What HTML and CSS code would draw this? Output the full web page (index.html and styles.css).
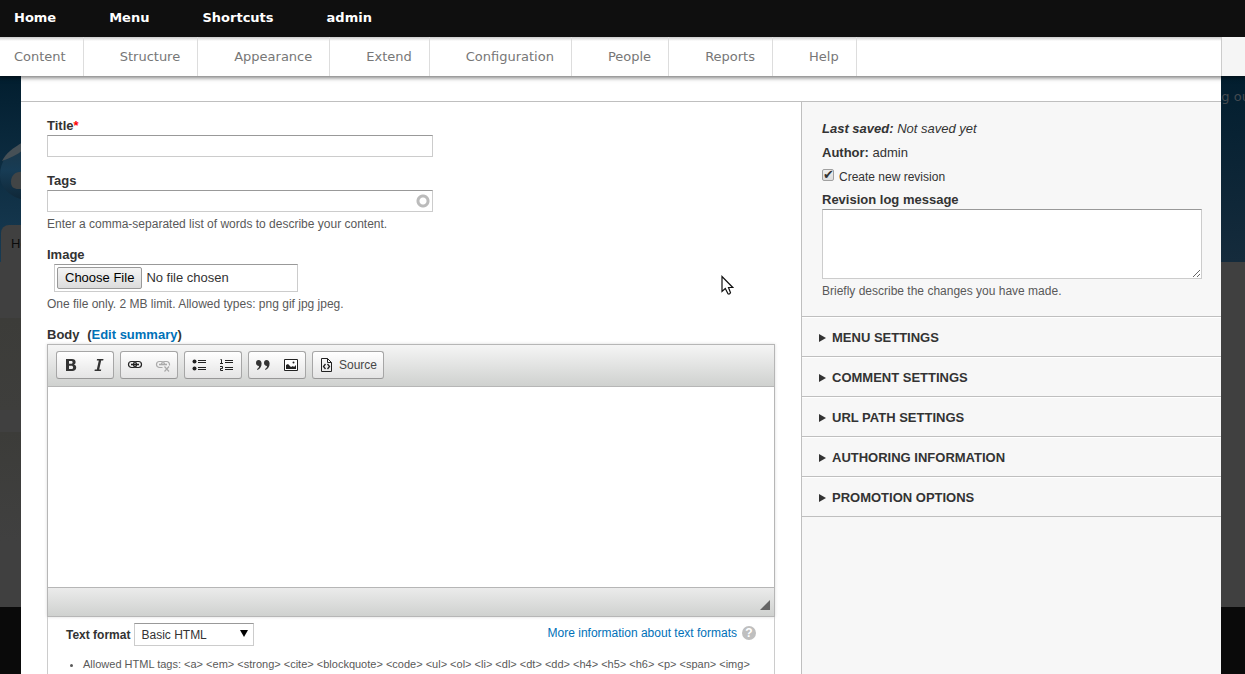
FILE: index.html
```
<!DOCTYPE html>
<html lang="en">
<head>
<meta charset="utf-8">
<title>Create Article</title>
<link rel="stylesheet" href="styles.css">
</head>
<body>
<header class="toolbar">
  <nav class="bar" aria-label="Toolbar">
    <a href="#">Home</a><a href="#">Menu</a><a href="#">Shortcuts</a><a href="#">admin</a>
  </nav>
  <nav class="tray" aria-label="Administration">
    <a href="#">Content</a><a href="#">Structure</a><a href="#">Appearance</a><a href="#">Extend</a><a href="#">Configuration</a><a href="#">People</a><a href="#">Reports</a><a href="#">Help</a>
    <span class="tray-end"></span>
  </nav>
</header>
<div class="stage">
  <div class="site">
    <div class="site-header">
      <svg class="drop" width="60" height="66" viewBox="0 0 60 66" aria-hidden="true">
        <defs><linearGradient id="drop" x1="0" y1="0" x2="0" y2="1"><stop offset="0" stop-color="#1d3442"/><stop offset=".5" stop-color="#173c55"/><stop offset="1" stop-color="#0f2636"/></linearGradient></defs>
        <path d="M0 36C0 22 8 14 22 4L60 0V62H30C12 60 0 50 0 36Z" fill="url(#drop)"/>
        <path d="M2 22C6 14 13 9 23 3V11C17 16 10 19 2 22Z" fill="#465056"/>
        <path d="M11 43C11 36 16 32 23 33C31 35 38 41 44 36L44 50H18C14 50 11 48 11 43Z" fill="#424546"/>
      </svg>
      <span class="logout">Log out</span>
      <span class="tab">Home</span>
    </div>
    <div class="site-main"><div class="block block-a"></div><div class="block block-b"></div></div>
    <div class="site-footer"></div>
  </div>
  <main class="modal">
    <div class="modal-head"></div>
    <form class="node-form">
      <section class="main-col">
        <div class="item">
          <label class="label" for="title">Title<span class="req">*</span></label>
          <input class="text" id="title" type="text">
        </div>
        <div class="item">
          <label class="label" for="tags">Tags</label>
          <input class="text auto" id="tags" type="text">
          <p class="desc">Enter a comma-separated list of words to describe your content.</p>
        </div>
        <div class="item">
          <label class="label" for="image">Image</label>
          <input class="file" id="image" type="file">
          <p class="desc">One file only. 2 MB limit. Allowed types: png gif jpg jpeg.</p>
        </div>
        <div class="item">
          <div class="label"><label for="body">Body</label> <span class="summary-link">(<a href="#">Edit summary</a>)</span></div>
          <div class="editor">
            <div class="ed-tools">
              <div class="group">
                <button type="button" aria-label="Bold"><svg width="16" height="16" viewBox="0 0 16 16"><path fill-rule="evenodd" fill="#333" d="M3 2h6c2.300 0 3.600 1 3.600 3 0 1.300-.6 2.200-1.700 2.600 1.500.4 2.300 1.400 2.300 3C13.200 12.900 11.700 14 9.300 14H3zM6 4.100v2.700h2c1 0 1.600-.5 1.600-1.400S9 4.100 8 4.100zM6 8.800v3.100h2.200c1.200 0 1.900-.5 1.900-1.500s-.7-1.600-1.900-1.600z"/></svg></button>
                <button type="button" aria-label="Italic"><svg width="16" height="16" viewBox="0 0 16 16"><path fill="#333" d="M6 2h6.500l-.3 1.500h-2L8.200 12.500h2l-.3 1.500H3.500l.3-1.500h2L7.800 3.500h-2z"/></svg></button>
              </div>
              <div class="group">
                <button type="button" aria-label="Link"><svg width="16" height="16" viewBox="0 0 16 16" fill="none" stroke="#222" stroke-width="1.200"><rect x="1.500" y="4.500" width="8" height="6" rx="3"/><rect x="6.500" y="4.500" width="8" height="6" rx="3"/><path d="M4 7.500h8" stroke-width="1.600"/></svg></button>
                <button type="button" aria-label="Unlink"><svg width="16" height="16" viewBox="0 0 16 16" fill="none" stroke="#aaa" stroke-width="1.200"><path d="M7.500 10.500h-3a3 3 0 0 1 0-6h2c2 0 3 1.500 3 3M14.500 8.500c.3-2.500-1-4-3-4h-2c-2 0-3 1.500-3 3"/><path d="M4 7.500h8" stroke-width="1.600"/><path d="M9.500 9.500l4.500 5M14 9.500l-4.500 5"/></svg></button>
              </div>
              <div class="group">
                <button type="button" aria-label="Bulleted list"><svg width="16" height="16" viewBox="0 0 16 16"><g fill="#222"><circle cx="3.500" cy="4.500" r="2"/><circle cx="3.500" cy="11.500" r="2"/><path d="M7 3h8v1H7zM7 5h8v1H7zM7 10h8v1H7zM7 12h8v1H7z"/></g></svg></button>
                <button type="button" aria-label="Numbered list"><svg width="16" height="16" viewBox="0 0 16 16"><path fill="#222" d="M6 3h8v1H6zM6 5h8v1H6zM6 10h8v1H6zM6 12h8v1H6z"/><path d="M1.500 2.500h1V6M1 6.500h3M1 9.500h2.500v2H1.500v2H4" fill="none" stroke="#222"/></svg></button>
              </div>
              <div class="group">
                <button type="button" aria-label="Block quote"><svg width="16" height="16" viewBox="0 0 16 16"><path fill="#333" d="M3.500 3C5.500 3 6.600 4.600 6.600 6.600c0 3-1.600 5.400-4.200 6.400l-.4-.9c1.300-.9 2-2 2-3.200C2.200 8.900 1 7.800 1 6c0-1.800 1-3 2.500-3zM11.500 3C13.500 3 14.600 4.600 14.600 6.600c0 3-1.600 5.400-4.200 6.400l-.4-.9c1.300-.9 2-2 2-3.200C10.200 8.900 9 7.800 9 6c0-1.800 1-3 2.500-3z"/></svg></button>
                <button type="button" aria-label="Image"><svg width="16" height="16" viewBox="0 0 16 16"><path d="M1.500 2.500h13v11h-13z" fill="#fff" stroke="#222"/><path fill="#222" d="M3 12V8l2-1 3 3 2-1 1 1 2-2v4z"/><circle cx="10.500" cy="5.500" r="1" fill="#222"/></svg></button>
              </div>
              <div class="group">
                <button class="source" type="button"><svg width="16" height="16" viewBox="0 0 16 16" fill="none" stroke="#222" aria-hidden="true"><path d="M2.500 1.500h6l4 4v9h-10zM8.500 1.500v4h4"/><path d="M6.500 7L4.500 9.500l2 2.500M8.500 7l2 2.500-2 2.500" stroke-width="1.300"/></svg>Source</button>
              </div>
            </div>
            <textarea class="ed-body" id="body"></textarea>
            <div class="ed-foot"><span class="ed-grip"></span></div>
          </div>
          <div class="format">
            <div class="format-row">
              <label for="format">Text format</label>
              <span class="select"><select id="format"><option>Basic HTML</option></select></span>
              <a class="help" href="#">More information about text formats <span class="qm">?</span></a>
            </div>
            <ul class="tips"><li>Allowed HTML tags: &lt;a&gt; &lt;em&gt; &lt;strong&gt; &lt;cite&gt; &lt;blockquote&gt; &lt;code&gt; &lt;ul&gt; &lt;ol&gt; &lt;li&gt; &lt;dl&gt; &lt;dt&gt; &lt;dd&gt; &lt;h4&gt; &lt;h5&gt; &lt;h6&gt; &lt;p&gt; &lt;span&gt; &lt;img&gt;</li></ul>
          </div>
        </div>
      </section>
      <aside class="side-col">
        <div class="meta">
          <p class="meta-line"><em><b>Last saved:</b> Not saved yet</em></p>
          <p class="meta-line"><b>Author:</b> admin</p>
          <div class="check"><input id="rev" type="checkbox" checked><label for="rev">Create new revision</label></div>
          <label class="label" for="log">Revision log message</label>
          <textarea class="log" id="log"></textarea>
          <p class="desc">Briefly describe the changes you have made.</p>
        </div>
        <details><summary>Menu settings</summary></details>
        <details><summary>Comment settings</summary></details>
        <details><summary>URL path settings</summary></details>
        <details><summary>Authoring information</summary></details>
        <details><summary>Promotion options</summary></details>
      </aside>
    </form>
  </main>
</div>
<svg class="cursor" width="13" height="21" viewBox="0 0 13 21" aria-hidden="true"><path d="M1 1.500v15l3.300-3 2.700 5.300q1.500.8 2.500-1L7.500 12.500h4.300z" fill="#fff" stroke="#111" stroke-width="1.200"/></svg>
</body>
</html>
```
FILE: styles.css
```
* { box-sizing: border-box; }
html, body { height: 100%; }
body {
  margin: 0;
  display: flex;
  flex-direction: column;
  overflow: hidden;
  font: 13px/18px "Liberation Sans", Arial, sans-serif;
  color: #333;
  background: #0a0a0a;
}
p, ul { margin: 0; padding: 0; }
a { color: #0071b8; text-decoration: none; }

/* Toolbar */
.toolbar {
  position: relative;
  z-index: 3;
  flex: none;
  font: 13px/40px "DejaVu Sans", Verdana, sans-serif;
  box-shadow: 0 1px 4px 1px rgba(0, 0, 0, .5);
}
.bar { display: flex; height: 37px; line-height: 35px; background: #0f0f0f; }
.bar a { padding: 0 17px 0 36px; color: #fff; font-weight: bold; }
.tray {
  display: flex;
  height: 39px;
  background: #fff linear-gradient(#ccc, #fff) top / 100% 4px no-repeat;
}
.tray a { padding: 0 17px 0 36px; color: #777; border-right: 1px solid #ddd; }
.bar a:first-child, .tray a:first-child { padding-left: 14px; }
.tray-end {
  width: 24px;
  margin-left: auto;
  border-left: 1px solid #ccc;
  background: #f5f5f5;
}

/* Dimmed site behind the dialog */
.stage { position: relative; flex: 1; min-height: 0; overflow: hidden; }
.site {
  position: absolute;
  inset: 0;
  display: flex;
  flex-direction: column;
  overflow: hidden;
}
.site-header {
  position: relative;
  flex: none;
  height: 186px;
  background: linear-gradient(#021e2f, #152b3c);
}
.site-header::before {
  content: "";
  position: absolute;
  inset: 0 auto 0 0;
  width: 50%;
  background: linear-gradient(#021e2f, #183b53);
}
.drop { position: absolute; left: 0; top: 63px; }
.logout { position: absolute; right: -10px; top: 12px; color: #434a50; font: 13px/18px "DejaVu Sans", sans-serif; }
.tab {
  position: absolute;
  left: 1px;
  bottom: 0;
  height: 37px;
  padding: 0 10px;
  border-radius: 8px 8px 0 0;
  background: #404040;
  color: #0b0b0b;
  line-height: 37px;
}
.site-main { flex: none; height: 345px; padding-top: 56px; background: #404040; }
.block { width: 50%; }
.block-a { height: 92px; margin-bottom: 22px; background: linear-gradient(#3c3c39, #3e3e3c); }
.block-b { height: 109px; background: linear-gradient(#3c3c39, #404040); }
.site-footer { flex: 1; background: #0a0a0a; }

/* Dialog */
.modal {
  position: relative;
  display: flex;
  flex-direction: column;
  height: 100%;
  margin: 0 24px 0 21px;
  background: #fff;
}
.modal-head { flex: none; height: 26px; border-bottom: 1px solid #bfbfbf; }
.node-form {
  flex: 1;
  display: grid;
  grid-template-columns: 65fr 35fr;
  min-height: 0;
}
.main-col {
  display: flex;
  flex-direction: column;
  gap: 15px;
  padding: 15px 26px 0;
  min-width: 0;
}
.label { display: block; line-height: 18px; font-weight: bold; }
.req { color: #f00; }
.summary-link { margin-left: 4px; }
.desc { margin-top: 5px; font-size: 12px; line-height: 14px; color: #595959; }
.text, .file, .log, select {
  display: block;
  border: 1px solid #ccc;
  border-top-color: #999;
  border-radius: 0;
  background: #fff;
  color: #333;
}
.text { width: 386px; max-width: 100%; height: 22px; padding: 2px; }
.auto { background: radial-gradient(circle, transparent 3px, #bbb 4px, #bbb 6px, transparent 7px) right 2px center / 14px 14px no-repeat; }
.file {
  width: 244px;
  height: 28px;
  margin-left: 7px;
  padding: 2px;
  font: 13px/22px "Liberation Sans", Arial, sans-serif;
}
.file::file-selector-button {
  height: 22px;
  margin: 0 4px 0 0;
  padding: 0 7px;
  border: 1px solid #999;
  border-radius: 2px;
  background: linear-gradient(#f4f4f4, #dcdcdc);
  font: 13px/20px "Liberation Sans", Arial, sans-serif;
  color: #000;
}

/* Editor */
.editor { border: 1px solid #b6b6b6; box-shadow: 0 0 3px rgba(0, 0, 0, .15); }
.ed-tools {
  display: flex;
  gap: 6px;
  padding: 6px 8px 7px;
  border-bottom: 1px solid #b6b6b6;
  background: linear-gradient(#f5f5f5, #cfd1cf);
}
.group {
  display: flex;
  border: 1px solid #a6a6a6;
  border-bottom-color: #979797;
  border-radius: 3px;
  background: linear-gradient(#fff, #e4e4e4);
}
.group button {
  display: flex;
  align-items: center;
  gap: 4px;
  height: 26px;
  padding: 0 6px;
  border: 0;
  background: none;
  font: 12px/18px "Liberation Sans", Arial, sans-serif;
  color: #474747;
}
.ed-body { display: block; width: 100%; height: 200px; border: 0; resize: none; background: #fff; }
.ed-foot {
  display: flex;
  justify-content: flex-end;
  align-items: flex-end;
  height: 29px;
  padding: 0 4px 6px;
  border-top: 1px solid #b6b6b6;
  background: linear-gradient(#ebebeb, #cfd1cf);
}
.ed-grip { width: 10px; height: 10px; background: #666; clip-path: polygon(100% 0, 100% 100%, 0 100%); }
.format {
  padding: 6px 18px 20px;
  border: solid #ccc;
  border-width: 0 1px;
}
.format-row { display: flex; align-items: center; gap: 4px; font-size: 12px; }
.format-row label { font-weight: bold; }
.select { position: relative; }
.select::after {
  content: "";
  position: absolute;
  right: 6px;
  top: 7px;
  border: solid transparent;
  border-width: 7px 4px 0;
  border-top-color: #000;
  pointer-events: none;
}
select {
  width: 120px;
  height: 23px;
  padding: 0 6px;
  appearance: none;
  font: 12px/18px "Liberation Sans", Arial, sans-serif;
}
.help { display: flex; align-items: center; gap: 5px; height: 18px; margin: 0 0 4px auto; }
.qm {
  width: 14px;
  height: 14px;
  border-radius: 7px;
  background: #bfbfbf;
  color: #fff;
  font-weight: bold;
  line-height: 14px;
  text-align: center;
}
.tips { padding: 10px 0 0 17px; font-size: 11px; line-height: 16px; color: #595959; }

/* Sidebar */
.side-col { border-left: 1px solid #bfbfbf; background: #f7f7f7; min-width: 0; }
.meta { padding: 15px 19px 18px 20px; border-bottom: 1px solid #bfbfbf; }
.meta-line { line-height: 24px; }
.check { display: flex; align-items: center; gap: 5px; height: 26px; padding-bottom: 3px; font-size: 12px; }
.check input {
  appearance: none;
  width: 12px;
  height: 12px;
  margin: 0 0 4px;
  border: 1px solid #a0a0a0;
  border-radius: 2px;
  background: linear-gradient(#eee, #ddd);
}
.check input::before {
  content: "✔";
  display: block;
  font: 13px/9px "DejaVu Sans", sans-serif;
  color: #333;
}
.log { width: 100%; height: 70px; }
details { border-bottom: 1px solid #bfbfbf; box-shadow: inset 0 1px #fff; }
summary {
  display: flex;
  align-items: center;
  gap: 6px;
  height: 39px;
  padding: 2px 0 0 17px;
  font-weight: bold;
  text-transform: uppercase;
}
summary::before {
  content: "";
  border: solid transparent;
  border-width: 4px 0 4px 7px;
  border-left-color: #333;
}
.cursor { position: absolute; z-index: 4; left: 721px; top: 275px; }
```
